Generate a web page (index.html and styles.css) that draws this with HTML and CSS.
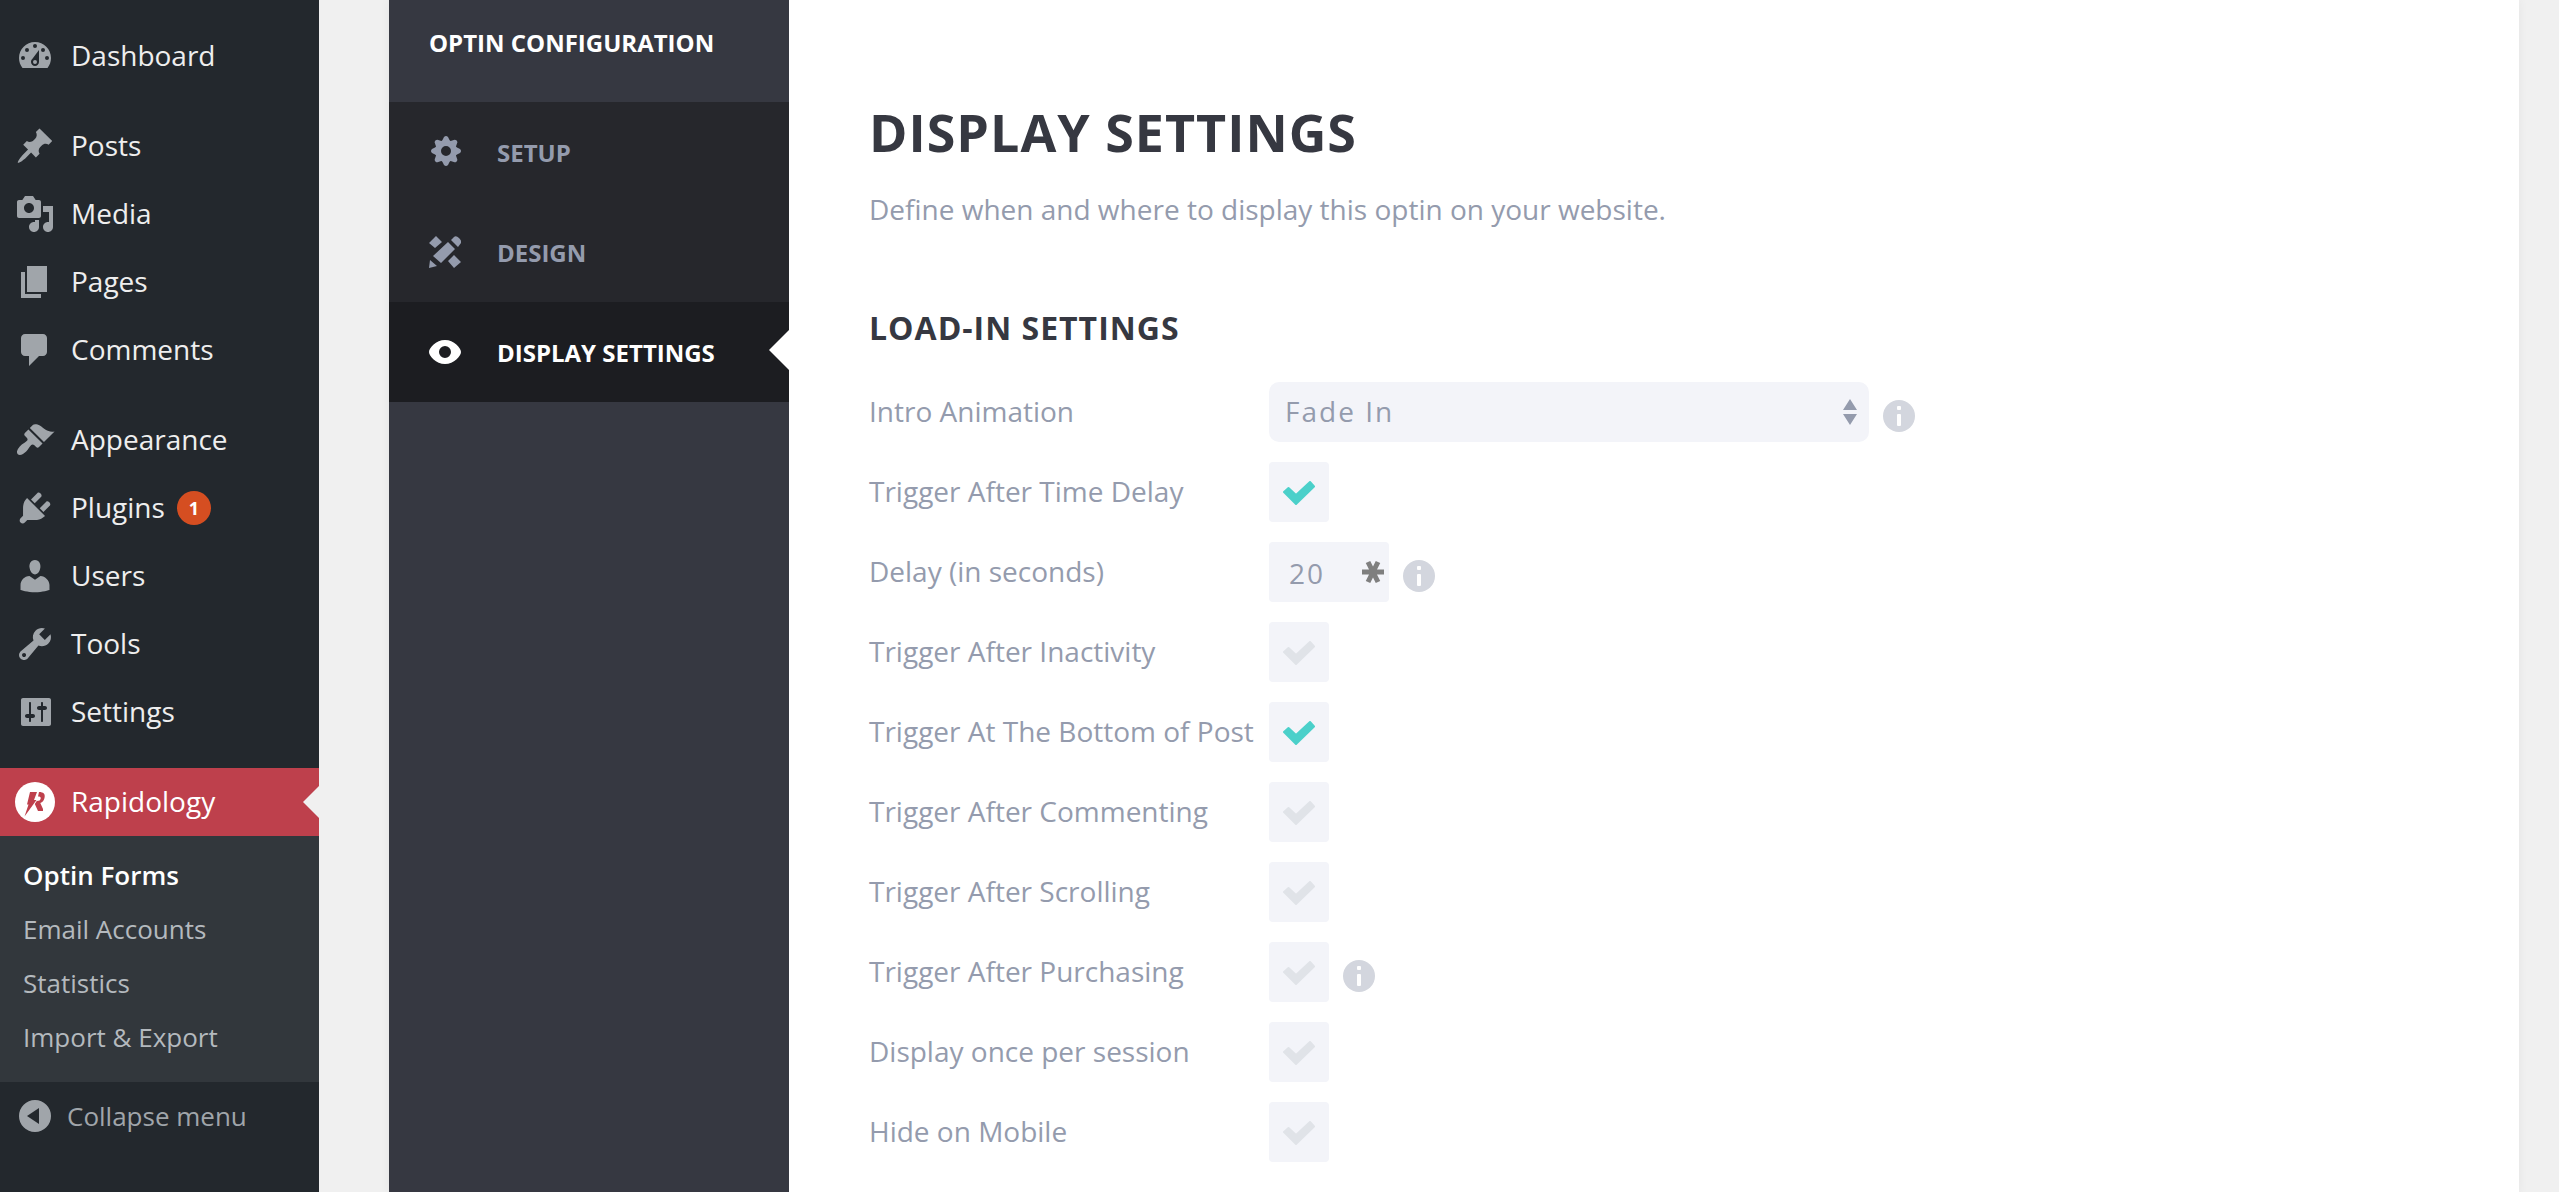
FILE: index.html
```html
<!DOCTYPE html>
<html lang="en">
<head>
<meta charset="utf-8">
<title>Rapidology – Display Settings</title>
<link rel="stylesheet" href="styles.css">
</head>
<body>
<svg class="sprite" aria-hidden="true">
  <symbol id="check" viewBox="0 0 32 24"><path d="M1 11l4.500-4 7.500 7L27 1l4 4.500L13 23z" fill="currentColor" stroke="currentColor" stroke-width="2" stroke-linejoin="round"/></symbol>
  <symbol id="info" viewBox="0 0 32 32"><circle cx="16" cy="16" r="16" fill="#d3d6de"/><rect x="14" y="6" width="4" height="4" rx="1" fill="#fff"/><rect x="14" y="14" width="4" height="12" rx="1" fill="#fff"/></symbol>
  <symbol id="tooth" viewBox="-17 -15 32 32" overflow="visible"><path d="M-5-9-2-14q2-2 4 0l3 5z"/></symbol>
</svg>
<div class="layout">
  <aside class="admin">
    <nav aria-label="Admin menu">
      <ul class="menu">
        <li><a class="menu-link" href="#"><svg class="menu-icon" viewBox="0 0 20 20"><path fill-rule="evenodd" d="M3.760 16h12.480c1.100-1.370 1.760-3.110 1.760-5 0-4.420-3.580-8-8-8s-8 3.580-8 8c0 1.890.66 3.630 1.760 5zM10 4a1 1 0 1 1 0 2 1 1 0 0 1 0-2zM6 6a1 1 0 1 1 0 2 1 1 0 0 1 0-2zM14 6a1 1 0 1 1 0 2 1 1 0 0 1 0-2zM8.630 11.550 12 7v6c0 1.100-.9 2-2 2s-2-.9-2-2c0-.57.24-1.080.63-1.450zM4 10a1 1 0 1 1 0 2 1 1 0 0 1 0-2zM16 10a1 1 0 1 1 0 2 1 1 0 0 1 0-2zM10 12a1 1 0 1 1 0 2 1 1 0 0 1 0-2z"/></svg><span class="menu-text">Dashboard</span></a></li>
        <li class="group"><a class="menu-link" href="#"><svg class="menu-icon" viewBox="0 0 20 20"><path d="M10.440 3.020l1.820-1.820 6.360 6.350-1.830 1.820c-1.050-.68-2.480-.57-3.410.36l-.75.75c-.92.93-1.040 2.350-.35 3.410l-1.830 1.820-2.410-2.410-2.800 2.790c-.42.42-3.380 2.710-3.800 2.290s1.860-3.390 2.280-3.810l2.790-2.790L4.100 9.360l1.830-1.820c1.050.69 2.480.57 3.400-.36l.75-.75c.93-.92 1.050-2.350.36-3.410z"/></svg><span class="menu-text">Posts</span></a></li>
        <li><a class="menu-link" href="#"><svg class="menu-icon" viewBox="0 0 20 20"><path fill-rule="evenodd" d="M13 11V4c0-.55-.45-1-1-1h-1.670L9 1H5L3.670 3H2c-.55 0-1 .45-1 1v7c0 .55.45 1 1 1h10c.55 0 1-.45 1-1zM7 4.500c1.380 0 2.500 1.120 2.500 2.500S8.380 9.500 7 9.500 4.500 8.380 4.500 7 5.620 4.500 7 4.500zM14 6h5v10.500c0 1.380-1.120 2.500-2.500 2.500S14 17.880 14 16.500s1.120-2.500 2.500-2.500c.17 0 .34.02.5.05V9h-3V6zm-4 8.050V13h2v3.500c0 1.380-1.120 2.500-2.500 2.500S7 17.880 7 16.500 8.120 14 9.500 14c.17 0 .34.02.5.05z"/></svg><span class="menu-text">Media</span></a></li>
        <li><a class="menu-link" href="#"><svg class="menu-icon" viewBox="0 0 20 20"><path d="M6 15V2h10v13H6zm-1 1h8v2H3V5h2v11z"/></svg><span class="menu-text">Pages</span></a></li>
        <li><a class="menu-link" href="#"><svg class="menu-icon" viewBox="0 0 20 20"><path d="M5 2h9c1.100 0 2 .9 2 2v7c0 1.100-.9 2-2 2h-2l-5 5v-5H5c-1.100 0-2-.9-2-2V4c0-1.100.9-2 2-2z"/></svg><span class="menu-text">Comments</span></a></li>
        <li class="group"><a class="menu-link" href="#"><svg class="menu-icon" viewBox="0 0 20 20"><path d="M14.480 11.060L7.410 3.990l1.500-1.500c.5-.56 2.300-.47 3.510.32 1.210.8 1.430 1.280 2.910 2.100 1.180.64 2.450 1.260 4.450.85zm-.71.71L6.700 4.700 4.930 6.470c-.39.39-.39 1.020 0 1.410l1.060 1.060c.39.39.39 1.030 0 1.420-.6.6-1.430 1.110-2.210 1.690-.35.26-.7.53-1.010.84C1.430 14.230.4 16.080 1.400 17.070c.99 1 2.840-.03 4.180-1.360.31-.31.58-.66.85-1.020.57-.78 1.080-1.610 1.690-2.210.39-.39 1.020-.39 1.410 0l1.060 1.060c.39.39 1.020.39 1.410 0z"/></svg><span class="menu-text">Appearance</span></a></li>
        <li><a class="menu-link" href="#"><svg class="menu-icon" viewBox="0 0 20 20"><path d="M13.110 4.360L9.870 7.600 8 5.730l3.240-3.240c.35-.34 1.050-.2 1.560.32.52.51.66 1.210.31 1.550zm-8 1.770l.91-1.120 9.010 9.010-1.190.84c-.71.71-2.630 1.160-3.820 1.160H6.140L4.900 17.260c-.59.59-1.540.59-2.120 0-.59-.58-.59-1.530 0-2.120l1.240-1.240v-3.880c0-1.130.4-3.190 1.090-3.890zm7.260 3.970l3.240-3.240c.34-.35 1.040-.21 1.550.31.52.51.66 1.210.31 1.550l-3.240 3.250z"/></svg><span class="menu-text">Plugins</span><span class="badge">1</span></a></li>
        <li><a class="menu-link" href="#"><svg class="menu-icon" viewBox="0 0 20 20"><path d="M10 9.250c-2.270 0-2.730-3.440-2.730-3.440C7 4.020 7.820 2 9.970 2c2.160 0 2.980 2.020 2.710 3.810 0 0-.41 3.440-2.680 3.440zm0 2.570L12.720 10c2.390 0 4.520 2.330 4.520 4.530v2.490s-3.650 1.130-7.240 1.130c-3.650 0-7.240-1.130-7.240-1.130v-2.490c0-2.250 1.940-4.480 4.470-4.480z"/></svg><span class="menu-text">Users</span></a></li>
        <li><a class="menu-link" href="#"><svg class="menu-icon" viewBox="0 0 20 20"><path fill-rule="evenodd" d="M16.680 9.770c-1.340 1.340-3.300 1.670-4.950.99l-5.410 6.520c-.99.99-2.590.99-3.580 0s-.99-2.590 0-3.570l6.520-5.420c-.68-1.650-.35-3.610.99-4.950 1.280-1.280 3.120-1.620 4.720-1.060l-2.890 2.890 2.820 2.820 2.860-2.870c.53 1.580.18 3.390-1.080 4.650zM3.810 16.210c.4.39 1.040.39 1.430 0 .4-.4.4-1.040 0-1.430-.39-.4-1.030-.4-1.430 0-.39.39-.39 1.030 0 1.430z"/></svg><span class="menu-text">Tools</span></a></li>
        <li><a class="menu-link" href="#"><svg class="menu-icon" viewBox="0 0 20 20"><path fill-rule="evenodd" d="M18 16V4c0-.55-.45-1-1-1H4c-.55 0-1 .45-1 1v12c0 .55.45 1 1 1h13c.55 0 1-.45 1-1zM8 11h1c.55 0 1 .45 1 1s-.45 1-1 1H8v1.500c0 .28-.22.5-.5.5s-.5-.22-.5-.5V13H6c-.55 0-1-.45-1-1s.45-1 1-1h1V5.500c0-.28.22-.5.5-.5s.5.22.5.5V11zm5-2h-1c-.55 0-1-.45-1-1s.45-1 1-1h1V5.500c0-.28.22-.5.5-.5s.5.22.5.5V7h1c.55 0 1 .45 1 1s-.45 1-1 1h-1v5.500c0 .28-.22.5-.5.5s-.5-.22-.5-.5V9z"/></svg><span class="menu-text">Settings</span></a></li>
        <li class="group">
          <a class="menu-link current" href="#"><svg class="menu-icon" viewBox="0 0 40 40"><circle cx="20" cy="20" r="20" fill="#fff"/><path fill="#be404c" d="M15 10h7l-3 8h2.500L9.500 34.500l4-12H12zM24 10c4.500 0 6.500 2 5.500 6-.6 2.600-2 4.200-4.200 5l2.700 6v2h-5l-3.200-7 2-3c2.600 0 3.600-.8 3.900-2.500.2-1.500-.7-1.900-2.700-1.900z"/></svg><span class="menu-text">Rapidology</span></a>
          <ul class="submenu">
            <li><a class="active" href="#">Optin Forms</a></li>
            <li><a href="#">Email Accounts</a></li>
            <li><a href="#">Statistics</a></li>
            <li><a href="#">Import &amp; Export</a></li>
          </ul>
        </li>
      </ul>
    </nav>
    <button class="collapse" type="button"><svg class="menu-icon" viewBox="0 0 40 40"><path fill-rule="evenodd" d="M20 4a16 16 0 1 1 0 32 16 16 0 0 1 0-32zM12 20l12 8V12z"/></svg>Collapse menu</button>
  </aside>
  <div class="panel">
    <nav class="config" aria-label="Optin configuration">
      <h2 class="config-title">OPTIN CONFIGURATION</h2>
      <ul class="tabs">
        <li><a class="tab" href="#"><svg class="tab-icon" viewBox="-17 -15 32 32"><g fill="currentColor"><circle r="8" fill="none" stroke="currentColor" stroke-width="6"/><path id="cog" d="M-4.500-9-2-14q2-2 4 0l2.500 5z"/><use href="#cog" transform="rotate(45)"/><use href="#cog" transform="rotate(90)"/><use href="#cog" transform="rotate(135)"/><use href="#cog" transform="rotate(180)"/><use href="#cog" transform="rotate(225)"/><use href="#cog" transform="rotate(270)"/><use href="#cog" transform="rotate(315)"/></g></svg><span>SETUP</span></a></li>
        <li><a class="tab" href="#"><svg class="tab-icon" viewBox="0 0 32 32"><path fill="currentColor" d="M7 0l6 6-7 6-6-5zM25 19l7 7-7 6-6-7zM19 6l7 7-14 14-8-7zM22 4l3-3q2-2 5 1 3 3 2 5l-3 4zM1 24l7 6-8 2z"/></svg><span>DESIGN</span></a></li>
        <li><a class="tab selected" href="#"><svg class="tab-icon" viewBox="0 0 32 32"><path fill="currentColor" fill-rule="evenodd" d="M16 4C25 4 32 12 32 16S25 28 16 28 0 20 0 16 7 4 16 4zM16 10a6 6 0 1 0 0 12 6 6 0 0 0 0-12z"/></svg><span>DISPLAY SETTINGS</span></a></li>
      </ul>
    </nav>
    <main class="content">
      <h1>DISPLAY SETTINGS</h1>
      <p class="intro">Define when and where to display this optin on your website.</p>
      <h2 class="section">LOAD-IN SETTINGS</h2>
      <form class="fields">
        <div class="row"><label for="anim">Intro Animation</label><span class="select"><select id="anim"><option>Fade In</option></select><svg class="arrows" viewBox="0 0 14 26"><path d="M7 0l7 11H0zM0 15h14L7 26z"/></svg></span><svg class="info"><use href="#info"/></svg></div>
        <div class="row"><label for="time">Trigger After Time Delay</label><span class="tick"><input type="checkbox" id="time" checked><svg><use href="#check"/></svg></span></div>
        <div class="row"><label for="delay">Delay (in seconds)</label><span class="number"><input type="text" id="delay" value="20"><svg class="star" viewBox="0 0 24 24"><path d="M1 12h22M7 2l10 20M17 2L7 22"/></svg></span><svg class="info"><use href="#info"/></svg></div>
        <div class="row"><label for="inactive">Trigger After Inactivity</label><span class="tick"><input type="checkbox" id="inactive"><svg><use href="#check"/></svg></span></div>
        <div class="row"><label for="bottom">Trigger At The Bottom of Post</label><span class="tick"><input type="checkbox" id="bottom" checked><svg><use href="#check"/></svg></span></div>
        <div class="row"><label for="comment">Trigger After Commenting</label><span class="tick"><input type="checkbox" id="comment"><svg><use href="#check"/></svg></span></div>
        <div class="row"><label for="scroll">Trigger After Scrolling</label><span class="tick"><input type="checkbox" id="scroll"><svg><use href="#check"/></svg></span></div>
        <div class="row"><label for="purchase">Trigger After Purchasing</label><span class="tick"><input type="checkbox" id="purchase"><svg><use href="#check"/></svg></span><svg class="info"><use href="#info"/></svg></div>
        <div class="row"><label for="session">Display once per session</label><span class="tick"><input type="checkbox" id="session"><svg><use href="#check"/></svg></span></div>
        <div class="row"><label for="mobile">Hide on Mobile</label><span class="tick"><input type="checkbox" id="mobile"><svg><use href="#check"/></svg></span></div>
      </form>
    </main>
  </div>
</div>
</body>
</html>
```
FILE: styles.css
```css
* { box-sizing: border-box; }
body { margin: 0; background: #f0f0f0; font-family: "Open Sans", sans-serif; }
ul { list-style: none; margin: 0; padding: 0; }
a { text-decoration: none; }
.sprite { display: none; }
.layout { display: flex; min-height: 100vh; }

/* Admin sidebar */
.admin { flex: none; width: 319px; background: #23282d; padding-top: 22px; }
.group { padding-top: 22px; }
.menu-link { display: flex; align-items: center; height: 68px; padding-left: 15px; color: #eee; font-size: 28px; line-height: 36px; position: relative; }
.menu-text { padding-bottom: 2px; }
.menu-icon { flex: none; width: 40px; height: 40px; margin-right: 16px; fill: #a0a5aa; }
.badge { width: 34px; height: 34px; margin-left: 12px; border-radius: 17px; background: #d54e21; color: #fff; font-size: 18px; font-weight: 700; line-height: 34px; text-align: center; }
.current { background: #be404c; color: #fff; }
.current::after { content: ""; position: absolute; right: 0; top: 18px; border: 16px solid transparent; border-left: 0; border-right-color: #f0f0f0; }
.submenu { background: #32373c; padding: 12px 0 18px; }
.submenu a { display: block; padding-left: 23px; color: #b4b9be; font-size: 26px; line-height: 54px; }
.submenu .active { color: #fff; font-weight: 600; }
.collapse { display: flex; align-items: center; width: 100%; height: 68px; border: 0; padding: 0 0 0 15px; background: none; color: #a0a5aa; font: 26px/36px "Open Sans", sans-serif; }
.collapse .menu-icon { margin-right: 12px; }

/* Plugin panel */
.panel { flex: 1; display: flex; margin: 0 40px 0 70px; background: #fff; box-shadow: 0 0 10px rgba(0, 0, 0, 0.05); }
.config { flex: none; width: 400px; background: #363841; }
.config-title { margin: 0; height: 102px; padding: 25px 0 0 40px; color: #fff; font-size: 24px; font-weight: 700; line-height: 36px; }
.tabs { background: #26272c; }
.tab { display: flex; align-items: center; height: 100px; padding-left: 40px; color: #949bad; font-size: 24px; font-weight: 700; line-height: 36px; position: relative; }
.tab span { padding-top: 2px; }
.tab-icon { flex: none; width: 32px; height: 32px; margin-right: 36px; }
.selected { background: #1c1d21; color: #fff; }
.selected::after { content: ""; position: absolute; right: 0; top: 28px; border: 20px solid transparent; border-left: 0; border-right-color: #fff; }

.content { flex: 1; padding: 97px 80px 32px; }
h1 { margin: 0; color: #363841; font-size: 52px; font-weight: 700; line-height: 70px; letter-spacing: 1px; }
.intro { margin: 22px 0 0; color: #949bad; font-size: 28px; line-height: 40px; }
.section { margin: 77px 0 0; color: #363841; font-size: 32px; font-weight: 700; line-height: 44px; letter-spacing: 1px; }
.fields { margin-top: 32px; display: grid; gap: 20px; }
.row { display: flex; align-items: center; height: 60px; color: #949bad; font-size: 28px; line-height: 40px; }
.row label { flex: none; width: 400px; padding-bottom: 2px; }
.select { position: relative; width: 600px; height: 60px; }
select { appearance: none; width: 100%; height: 60px; border: 0; border-radius: 10px; padding: 0 16px 2px; background: #f3f4f9; color: #949bad; font: 28px/40px "Open Sans", sans-serif; letter-spacing: 2px; }
.arrows { position: absolute; right: 12px; top: 17px; width: 14px; height: 26px; fill: #949bad; }
.info { width: 32px; height: 32px; margin: 8px 0 0 14px; }
.tick { position: relative; width: 60px; height: 60px; color: #e0e3e8; }
.tick input { appearance: none; width: 60px; height: 60px; margin: 0; border-radius: 4px; background: #f3f4f9; }
.tick svg { position: absolute; left: 14px; top: 19px; width: 32px; height: 24px; pointer-events: none; }
.tick input:checked + svg { color: #4bd0ca; }
.number { position: relative; width: 120px; height: 60px; }
.number input { width: 100%; height: 60px; border: 0; border-radius: 4px; padding: 2px 20px 0; background: #f3f4f9; color: #949bad; font: 28px/40px "Open Sans", sans-serif; letter-spacing: 2px; }
.star { position: absolute; right: 4px; top: 18px; width: 24px; height: 24px; fill: none; stroke: #7f7f7f; stroke-width: 5; }
```
